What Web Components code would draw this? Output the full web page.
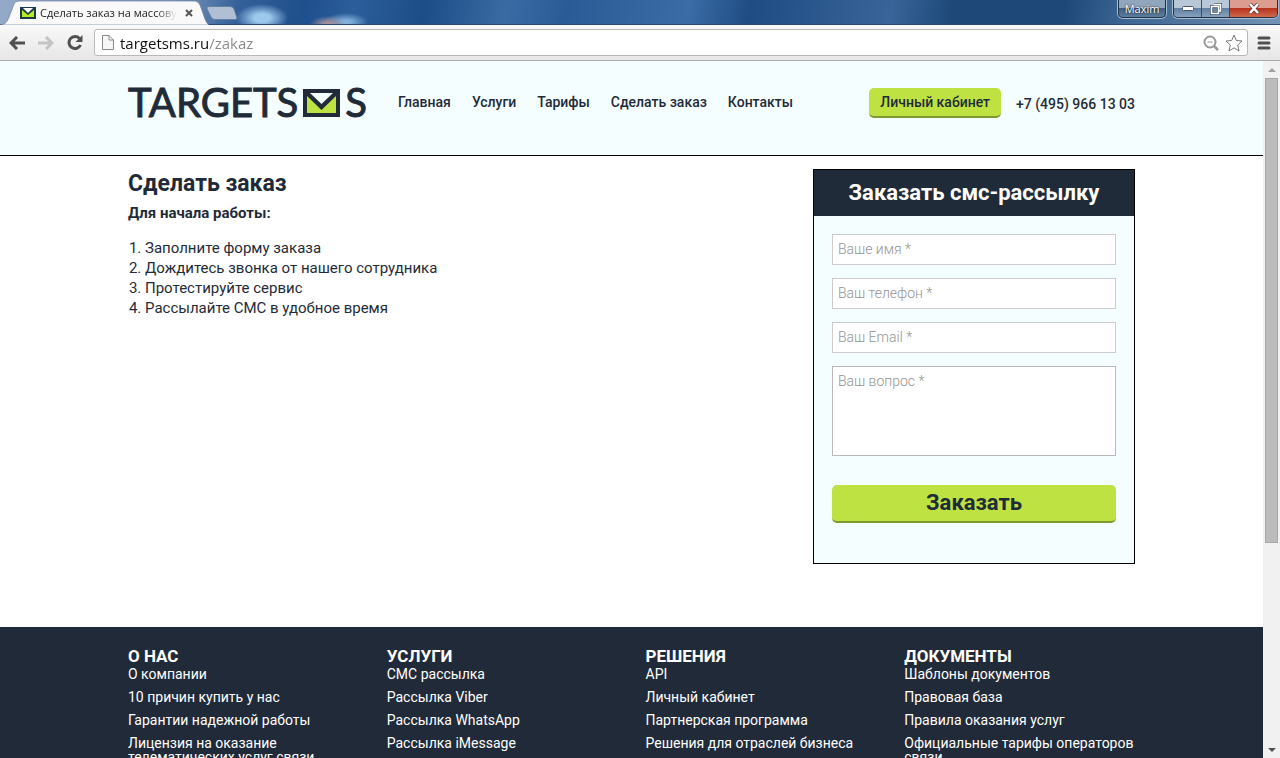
<!DOCTYPE html>
<html lang="ru">
<head>
<meta charset="utf-8">
<meta name="viewport" content="width=device-width, initial-scale=1">
<title>Сделать заказ на массовую рассылку</title>
<style>
    body {
        margin: 0;
        height: 100vh;
        overflow: hidden;
        font-family: Roboto, "Liberation Sans", sans-serif;
        color: #1f2b38;
        --dark: #1f2b38;
        --lime: #bfe243;
        --lime-dark: #7c9a30;
        --ice: #f5feff;
    }
</style>
</head>
<body>
<browser-window>
    <window-tabs slot="chrome">Сделать заказ на массовую рассылку</window-tabs>
    <address-bar slot="chrome" url="targetsms.ru/zakaz"></address-bar>

    <site-header>
        <a slot="nav" href="#">Главная</a>
        <a slot="nav" href="#">Услуги</a>
        <a slot="nav" href="#">Тарифы</a>
        <a slot="nav" href="#">Сделать заказ</a>
        <a slot="nav" href="#">Контакты</a>
        <span slot="phone">+7 (495) 966 13 03</span>
    </site-header>
    <order-page>
        <order-steps></order-steps>
        <order-form></order-form>
    </order-page>
    <site-footer>
        <footer-column heading="О НАС">
            <a href="#">О компании</a>
            <a href="#">10 причин купить у нас</a>
            <a href="#">Гарантии надежной работы</a>
            <a href="#">Лицензия на оказание телематических услуг связи</a>
        </footer-column>
        <footer-column heading="УСЛУГИ">
            <a href="#">СМС рассылка</a>
            <a href="#">Рассылка Viber</a>
            <a href="#">Рассылка WhatsApp</a>
            <a href="#">Рассылка iMessage</a>
        </footer-column>
        <footer-column heading="РЕШЕНИЯ">
            <a href="#">API</a>
            <a href="#">Личный кабинет</a>
            <a href="#">Партнерская программа</a>
            <a href="#">Решения для отраслей бизнеса</a>
        </footer-column>
        <footer-column heading="ДОКУМЕНТЫ">
            <a href="#">Шаблоны документов</a>
            <a href="#">Правовая база</a>
            <a href="#">Правила оказания услуг</a>
            <a href="#">Официальные тарифы операторов связи</a>
        </footer-column>
    </site-footer>
</browser-window>

<script>
const reset = `
    * {
        margin: 0;
        padding: 0;
        box-sizing: border-box;
    }
    button {
        font: inherit;
        color: inherit;
        border: 0;
        background: none;
        cursor: pointer;
    }
    svg {
        display: block;
    }
`;

class BrowserWindow extends HTMLElement {
    constructor(){
        super();
        this.attachShadow({mode:'open'}).innerHTML = `
        <style>
            ${reset}
            :host {
                display: flex;
                flex-direction: column;
                height: 100%;
            }
            .view {
                flex: 1;
                min-height: 0;
                display: flex;
            }
            main {
                flex: 1;
                min-width: 0;
                overflow: hidden;
                background: #fff;
            }
        </style>
        <slot name="chrome"></slot>
        <div class="view">
            <main><slot></slot></main>
            <page-scrollbar></page-scrollbar>
        </div>
        `;
    }
}
customElements.define('browser-window', BrowserWindow);

class PageScrollbar extends HTMLElement {
    constructor(){
        super();
        this.attachShadow({mode:'open'}).innerHTML = `
        <style>
            ${reset}
            :host {
                display: flex;
                flex-direction: column;
                width: 17px;
                background: #f1f1f1;
            }
            button {
                height: 17px;
                display: grid;
                place-items: center;
            }
            .thumb {
                flex: 7;
                margin: 0 2px;
                background: #bcbcbc;
                border: 1px solid #a8a8a8;
            }
            .rest {
                flex: 3;
            }
        </style>
        <button aria-label="Вверх"><svg width="8" height="4"><path d="M0 4 4 0 8 4z" fill="#a0a0a0"/></svg></button>
        <div class="thumb"></div>
        <div class="rest"></div>
        <button aria-label="Вниз"><svg width="8" height="4"><path d="M0 0 4 4 8 0z" fill="#505050"/></svg></button>
        `;
    }
}
customElements.define('page-scrollbar', PageScrollbar);

class WindowTabs extends HTMLElement {
    constructor(){
        super();
        this.attachShadow({mode:'open'}).innerHTML = `
        <style>
            ${reset}
            :host {
                display: flex;
                height: 25px;
                font: 11px/16px "Open Sans", "Noto Sans", sans-serif;
                color: #222;
                background:
                    radial-gradient(ellipse 26px 14px at 262px 18px, #9cc8ec 30%, transparent),
                    radial-gradient(ellipse 18px 8px at 328px 24px, #a28f9d 20%, transparent),
                    radial-gradient(ellipse 22px 9px at 346px 22px, #7fb0dc 20%, transparent),
                    linear-gradient(100deg, #94a9c8 0, #7f99bf 170px, #35619a 235px, #1f4f8c 300px, #2b5e9b 350px, #1d4d86 420px, #3a6ba3 500px, #2a5b96 560px, #3b6ca5 680px, #1f4c83 740px, #386499 880px, #1d4878 940px, #1d4878 1050px, #3c6593 1110px, #54789f 1180px, #7594b4);
                box-shadow: inset 0 -1px #2c4a70;
            }
            .tab {
                position: relative;
                width: 209px;
                height: 25px;
                padding: 5px 12px 0 20px;
                display: flex;
                gap: 4px;
            }
            .shape {
                position: absolute;
                inset: 0;
            }
            .icon {
                position: relative;
                margin-top: 2px;
            }
            .title {
                position: relative;
                flex: 1;
                overflow: hidden;
                white-space: nowrap;
                -webkit-mask-image: linear-gradient(90deg, #000 85%, transparent);
                mask-image: linear-gradient(90deg, #000 85%, transparent);
            }
            .close {
                position: relative;
                width: 16px;
                height: 16px;
                display: grid;
                place-items: center;
            }
            .new {
                margin: 6px auto 0 -3px;
                height: 14px;
            }
            .user, .controls {
                height: 18px;
                border: 1px solid #1f2f44;
                border-top: 0;
                border-radius: 0 0 5px 5px;
                box-shadow: 0 0 0 1px #a9bdd2;
                overflow: hidden;
            }
            .user {
                width: 48px;
                margin-right: 7px;
                color: #fff;
                text-shadow: 0 0 2px #000;
                background: linear-gradient(#90a6bd 0 8px, #3d5c80 8px, #5f7f9f);
            }
            .controls {
                display: flex;
                margin-right: 2px;
            }
            .controls button {
                display: grid;
                place-items: center;
                width: 28px;
                border-right: 1px solid #3a4d66;
                background: linear-gradient(#b9c8d8 0 8px, #607e9f 8px, #86a2bf);
            }
            .controls button:last-child {
                width: 47px;
                border: 0;
                background: linear-gradient(#dc9c90 0 8px, #b5301c 8px, #d1694c);
            }
        </style>
        <div class="tab">
            <svg class="shape" width="209" height="25"><path d="M0 25C6 24 7 22 9 17L14 4Q15 1 19 1H195Q198 1 200 5L205 19Q207 24 209 25z" fill="#f9f9f9" stroke="#647c9c" stroke-width=".7"/></svg>
            <svg class="icon" width="16" height="12"><rect width="16" height="12" fill="#1b3a4a"/><path d="M2 3v7h12V3L8 8z" fill="#b4ea20"/><path d="M3 1h10L8 6z" fill="#fff"/></svg>
            <span class="title"><slot></slot></span>
            <button class="close" aria-label="Закрыть вкладку"><svg width="8" height="8"><path d="M1 1 7 7M7 1 1 7" stroke="#555" stroke-width="2"/></svg></button>
        </div>
        <button class="new" aria-label="Новая вкладка"><svg width="32" height="15"><path d="M3 .5H24Q27 .5 28 3L31 12Q31 13.500 29 13.500H9Q6 13.500 5 11L1 3Q0 .5 3 .5z" fill="#b0bfd3" stroke="#62809f"/></svg></button>
        <button class="user">Maxim</button>
        <div class="controls">
            <button aria-label="Свернуть"><svg width="12" height="6"><rect x=".5" y=".5" width="11" height="4" rx="1" fill="#fff" stroke="#47566b"/></svg></button>
            <button aria-label="Развернуть"><svg width="12" height="12"><path d="M4 1.500H10.500V8H9M1.500 3.500h7v7h-7z" fill="none" stroke="#47566b" stroke-width="3"/><path d="M4 1.500H10.500V8H9M1.500 3.500h7v7h-7z" fill="none" stroke="#fff" stroke-width="1.500"/></svg></button>
            <button aria-label="Закрыть"><svg width="12" height="11"><path d="M2 1 10 10M10 1 2 10" stroke="#5c3035" stroke-width="4"/><path d="M2 1 10 10M10 1 2 10" stroke="#fff" stroke-width="2.600"/></svg></button>
        </div>
        `;
    }
}
customElements.define('window-tabs', WindowTabs);

class AddressBar extends HTMLElement {
    constructor(){
        super();
        this.attachShadow({mode:'open'}).innerHTML = `
        <style>
            ${reset}
            :host {
                display: flex;
                align-items: center;
                height: 36px;
                padding: 0 9px;
                background: linear-gradient(#f9f9f9, #e6e6e6);
                border-bottom: 1px solid #a9acab;
                box-sizing: border-box;
            }
            .nav {
                display: flex;
                gap: 13px;
                margin-right: 11px;
            }
            .box {
                flex: 1;
                display: flex;
                align-items: center;
                gap: 6px;
                height: 27px;
                padding: 0 4px 0 7px;
                margin-right: 9px;
                background: #fff;
                border: 1px solid #b8b8b8;
                border-radius: 3px;
            }
            input {
                flex: 1;
                min-width: 0;
                border: 0;
                outline: 0;
                font: 15px/20px "Open Sans", "Noto Sans", sans-serif;
                color: transparent;
                /* the host name is dark, the path is grey */
                background: linear-gradient(90deg, #111 0 88px, #888 88px);
                -webkit-background-clip: text;
                background-clip: text;
            }
        </style>
        <div class="nav">
            <button aria-label="Назад"><svg width="16" height="14" fill="none" stroke="#505050" stroke-width="3"><path d="M2 7H16M8 1 2 7 8 13"/></svg></button>
            <button aria-label="Вперёд"><svg width="16" height="14" fill="none" stroke="#c4c4c4" stroke-width="3"><path d="M0 7H14M8 1 14 7 8 13"/></svg></button>
            <button aria-label="Обновить"><svg width="16" height="15"><path d="M12.500 3.500A6 6 0 1 0 13.500 10" fill="none" stroke="#505050" stroke-width="3"/><path d="M15.500 0V7H8.500z" fill="#505050"/></svg></button>
        </div>
        <div class="box">
            <svg width="12" height="15"><path d="M.5.5H7L11.500 5V14.500H.5zM7 .5V5H11.500" fill="#f6f6f6" stroke="#8a8a8a"/></svg>
            <input type="text" aria-label="Адрес" value="${this.getAttribute('url')}">
            <button aria-label="Масштаб"><svg width="16" height="16" fill="none" stroke="#999"><circle cx="7" cy="7" r="5.500" stroke-width="2"/><path d="M4.500 7H9.500"/><path d="M11 11 15 15" stroke-width="2.500"/></svg></button>
            <button aria-label="В закладки"><svg width="18" height="18"><path d="M9 1 11.300 6.500 17 7 12.700 11 14 17 9 13.800 4 17 5.300 11 1 7 6.700 6.500z" fill="#fff" stroke="#777" stroke-linejoin="round"/></svg></button>
        </div>
        <button aria-label="Меню"><svg width="14" height="14"><path d="M2 2H12M2 7H12M2 12H12" stroke="#505050" stroke-width="3" stroke-linecap="round"/></svg></button>
        `;
    }
}
customElements.define('address-bar', AddressBar);

class SiteLogo extends HTMLElement {
    constructor(){
        super();
        this.attachShadow({mode:'open'}).innerHTML = `
        <style>
            ${reset}
            a {
                display: flex;
                align-items: center;
                gap: 5px;
                height: 30px;
                font: 40px/28px Lato, "Open Sans", sans-serif;
                -webkit-text-stroke: 1px var(--dark);
                color: var(--dark);
                text-decoration: none;
            }
            span {
                align-self: flex-start;
            }
        </style>
        <a href="#" aria-label="TARGETSMS">
            <span>TARGETS</span>
            <svg width="37" height="28"><rect width="37" height="28" fill="#1f2b38"/><path d="M4 7V24H33V7L18.500 21z" fill="#bfe243"/><path d="M7 4H30L18.500 15z" fill="#f5feff"/></svg>
            <span>S</span>
        </a>
        `;
    }
}
customElements.define('site-logo', SiteLogo);

class SiteHeader extends HTMLElement {
    constructor(){
        super();
        this.attachShadow({mode:'open'}).innerHTML = `
        <style>
            ${reset}
            :host {
                display: flex;
                align-items: flex-start;
                height: 95px;
                padding: 27px 128px 0;
                box-sizing: border-box;
                background: var(--ice);
                border-bottom: 1px solid #000;
            }
            nav {
                display: flex;
                gap: 21px;
                margin-left: 31px;
                margin-right: auto;
            }
            nav, .account, .phone {
                font-size: 14px;
                line-height: 28px;
                font-weight: 500;
                white-space: nowrap;
            }
            ::slotted(a) {
                color: inherit;
                text-decoration: none;
            }
            .account {
                height: 30px;
                padding: 0 11px;
                margin-right: 15px;
                border-radius: 5px;
                border-bottom: 2px solid var(--lime-dark);
                background: var(--lime);
            }
            .phone {
                line-height: 32px;
            }
        </style>
        <site-logo></site-logo>
        <nav><slot name="nav"></slot></nav>
        <button class="account">Личный кабинет</button>
        <div class="phone"><slot name="phone"></slot></div>
        `;
    }
}
customElements.define('site-header', SiteHeader);

class OrderPage extends HTMLElement {
    constructor(){
        super();
        this.attachShadow({mode:'open'}).innerHTML = `
        <style>
            :host {
                display: flex;
                justify-content: space-between;
                align-items: flex-start;
                padding: 13px 128px 63px;
            }
        </style>
        <slot></slot>
        `;
    }
}
customElements.define('order-page', OrderPage);

class OrderSteps extends HTMLElement {
    constructor(){
        super();
        this.attachShadow({mode:'open'}).innerHTML = `
        <style>
            ${reset}
            :host {
                display: block;
            }
            h1 {
                font-size: 23px;
                line-height: 30px;
            }
            h2 {
                margin: 4px 0 15px;
                font-size: 15px;
                line-height: 20px;
            }
            ol {
                padding-left: 17px;
                font-size: 15px;
                line-height: 20px;
            }
        </style>
        <h1>Сделать заказ</h1>
        <h2>Для начала работы:</h2>
        <ol>
            <li>Заполните форму заказа</li>
            <li>Дождитесь звонка от нашего сотрудника</li>
            <li>Протестируйте сервис</li>
            <li>Рассылайте СМС в удобное время</li>
        </ol>
        `;
    }
}
customElements.define('order-steps', OrderSteps);

class OrderForm extends HTMLElement {
    constructor(){
        super();
        this.attachShadow({mode:'open'}).innerHTML = `
        <style>
            ${reset}
            :host {
                display: block;
                width: 322px;
                box-sizing: border-box;
                border: 1px solid #000;
                background: var(--ice);
            }
            h2 {
                font-size: 22px;
                line-height: 46px;
                text-align: center;
                color: #fff;
                background: var(--dark);
            }
            form {
                display: flex;
                flex-direction: column;
                gap: 13px;
                padding: 18px 18px 40px;
            }
            input, textarea {
                display: block;
                height: 31px;
                padding: 0 5px 2px;
                border: 1px solid #ccc;
                font: 300 14px/28px Roboto, sans-serif;
                color: var(--dark);
                background: #fff;
            }
            textarea {
                height: 90px;
                border-color: #b9b9b9;
                resize: none;
            }
            ::placeholder {
                color: #949494;
                opacity: 1;
            }
            button {
                height: 38px;
                margin-top: 16px;
                font-size: 22px;
                line-height: 34px;
                font-weight: 700;
                border-radius: 5px;
                border-bottom: 2px solid var(--lime-dark);
                background: var(--lime);
            }
        </style>
        <h2>Заказать смс-рассылку</h2>
        <form>
            <input type="text" aria-label="Ваше имя" placeholder="Ваше имя *">
            <input type="tel" aria-label="Ваш телефон" placeholder="Ваш телефон *">
            <input type="email" aria-label="Ваш Email" placeholder="Ваш Email *">
            <textarea aria-label="Ваш вопрос" placeholder="Ваш вопрос *"></textarea>
            <button type="submit">Заказать</button>
        </form>
        `;
    }
}
customElements.define('order-form', OrderForm);

class SiteFooter extends HTMLElement {
    constructor(){
        super();
        this.attachShadow({mode:'open'}).innerHTML = `
        <style>
            :host {
                display: grid;
                grid-template-columns: repeat(4, 1fr);
                gap: 28px;
                padding: 20px 128px 40px;
                color: #fff;
                background: #212a38;
            }
        </style>
        <slot></slot>
        `;
    }
}
customElements.define('site-footer', SiteFooter);

class FooterColumn extends HTMLElement {
    constructor(){
        super();
        this.attachShadow({mode:'open'}).innerHTML = `
        <style>
            ${reset}
            :host {
                display: block;
                font-size: 14px;
                line-height: 14px;
            }
            h3 {
                margin-bottom: 2px;
                font-size: 17px;
                line-height: 18px;
            }
            ::slotted(a) {
                display: block;
                margin-bottom: 9px;
                color: inherit;
                text-decoration: none;
            }
        </style>
        <h3>${this.getAttribute('heading')}</h3>
        <slot></slot>
        `;
    }
}
customElements.define('footer-column', FooterColumn);
</script>
</body>
</html>
